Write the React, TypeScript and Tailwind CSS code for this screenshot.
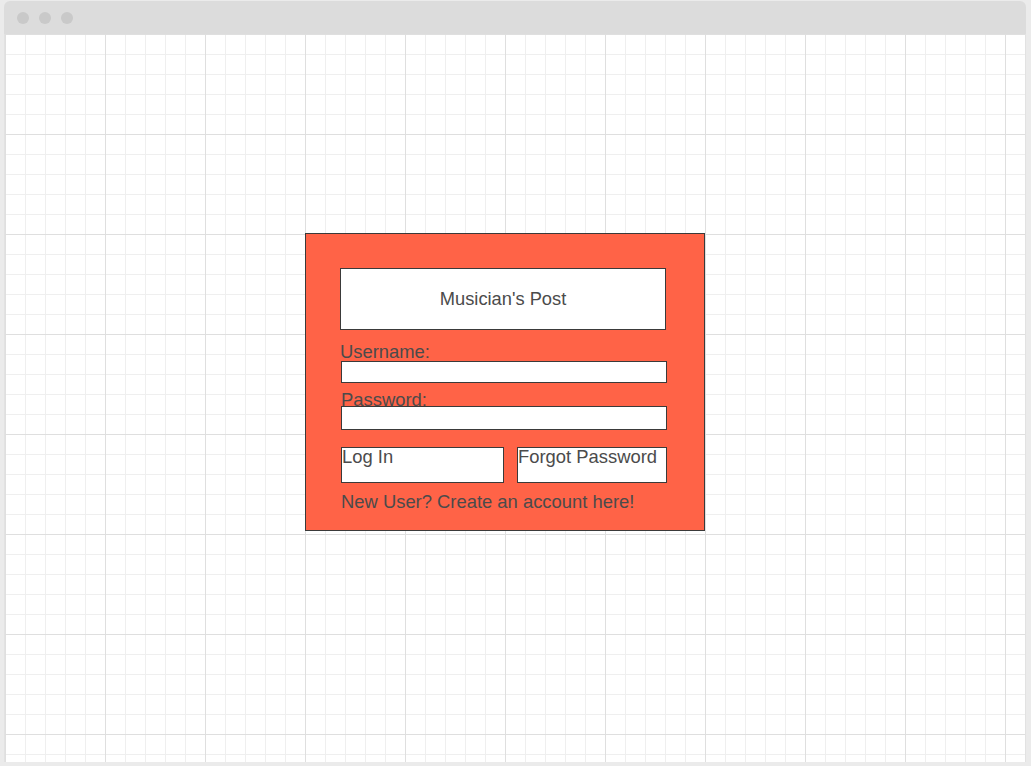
const textFont = "font-['Liberation_Sans',Arial,sans-serif]"

function WindowChrome() {
  return (
    <div className="flex h-[33px] items-center gap-[10px] rounded-t-[6px] bg-[#dcdcdc] pl-[13px]">
      <span className="h-[12px] w-[12px] rounded-full bg-[#c9c9c9]" />
      <span className="h-[12px] w-[12px] rounded-full bg-[#c9c9c9]" />
      <span className="h-[12px] w-[12px] rounded-full bg-[#c9c9c9]" />
    </div>
  )
}

function LoginCard() {
  return (
    <form
      className={`${textFont} flex h-[298px] w-[400px] flex-col border border-[#3a3a3a] bg-[#ff6347] pl-[34px] pt-[34px] text-[18.4px] leading-[18px] text-[#4b4b4b]`}
      onSubmit={(event) => event.preventDefault()}
    >
      <div className="flex h-[62px] w-[326px] items-center justify-center border border-[#3a3a3a] bg-white text-[18.3px]">
        Musician&apos;s Post
      </div>

      <label className="mt-[11px] block h-[20px] pt-[2px]">Username:</label>
      <input
        type="text"
        aria-label="Username"
        className="ml-[1px] h-[22px] w-[326px] border border-[#3a3a3a] bg-white outline-none"
      />

      <label className="ml-[1px] mt-[6px] block h-[17px] pt-[2px]">Password:</label>
      <input
        type="password"
        aria-label="Password"
        className="ml-[1px] h-[24px] w-[326px] border border-[#3a3a3a] bg-white outline-none"
      />

      <div className="ml-[1px] mt-[17px] flex gap-[13px]">
        <button
          type="submit"
          className="flex h-[36px] w-[163px] items-start border border-[#3a3a3a] bg-white text-left leading-[18px]"
        >
          Log In
        </button>
        <button
          type="button"
          className="flex h-[36px] w-[150px] items-start border border-[#3a3a3a] bg-white text-left leading-[18px]"
        >
          Forgot Password
        </button>
      </div>

      <p className="mt-[10px] pl-[1px]">New User? Create an account here!</p>
    </form>
  )
}

export default function App() {
  return (
    <div className="h-[766px] w-[1031px] overflow-hidden bg-[#ebebeb] pt-[1px]">
      <div className="ml-[4px] flex h-[761px] w-[1022px] flex-col">
        <WindowChrome />
        <div className="flex-1 border-x border-[#e2e2e2] bg-white bg-[linear-gradient(to_right,#dfdfdf_1px,transparent_1px),linear-gradient(to_bottom,#dfdfdf_1px,transparent_1px),linear-gradient(to_right,#efefef_1px,transparent_1px),linear-gradient(to_bottom,#efefef_1px,transparent_1px)] bg-[size:100px_100px,100px_100px,20px_20px,20px_20px] pl-[300px] pt-[199px]">
          <LoginCard />
        </div>
      </div>
    </div>
  )
}
